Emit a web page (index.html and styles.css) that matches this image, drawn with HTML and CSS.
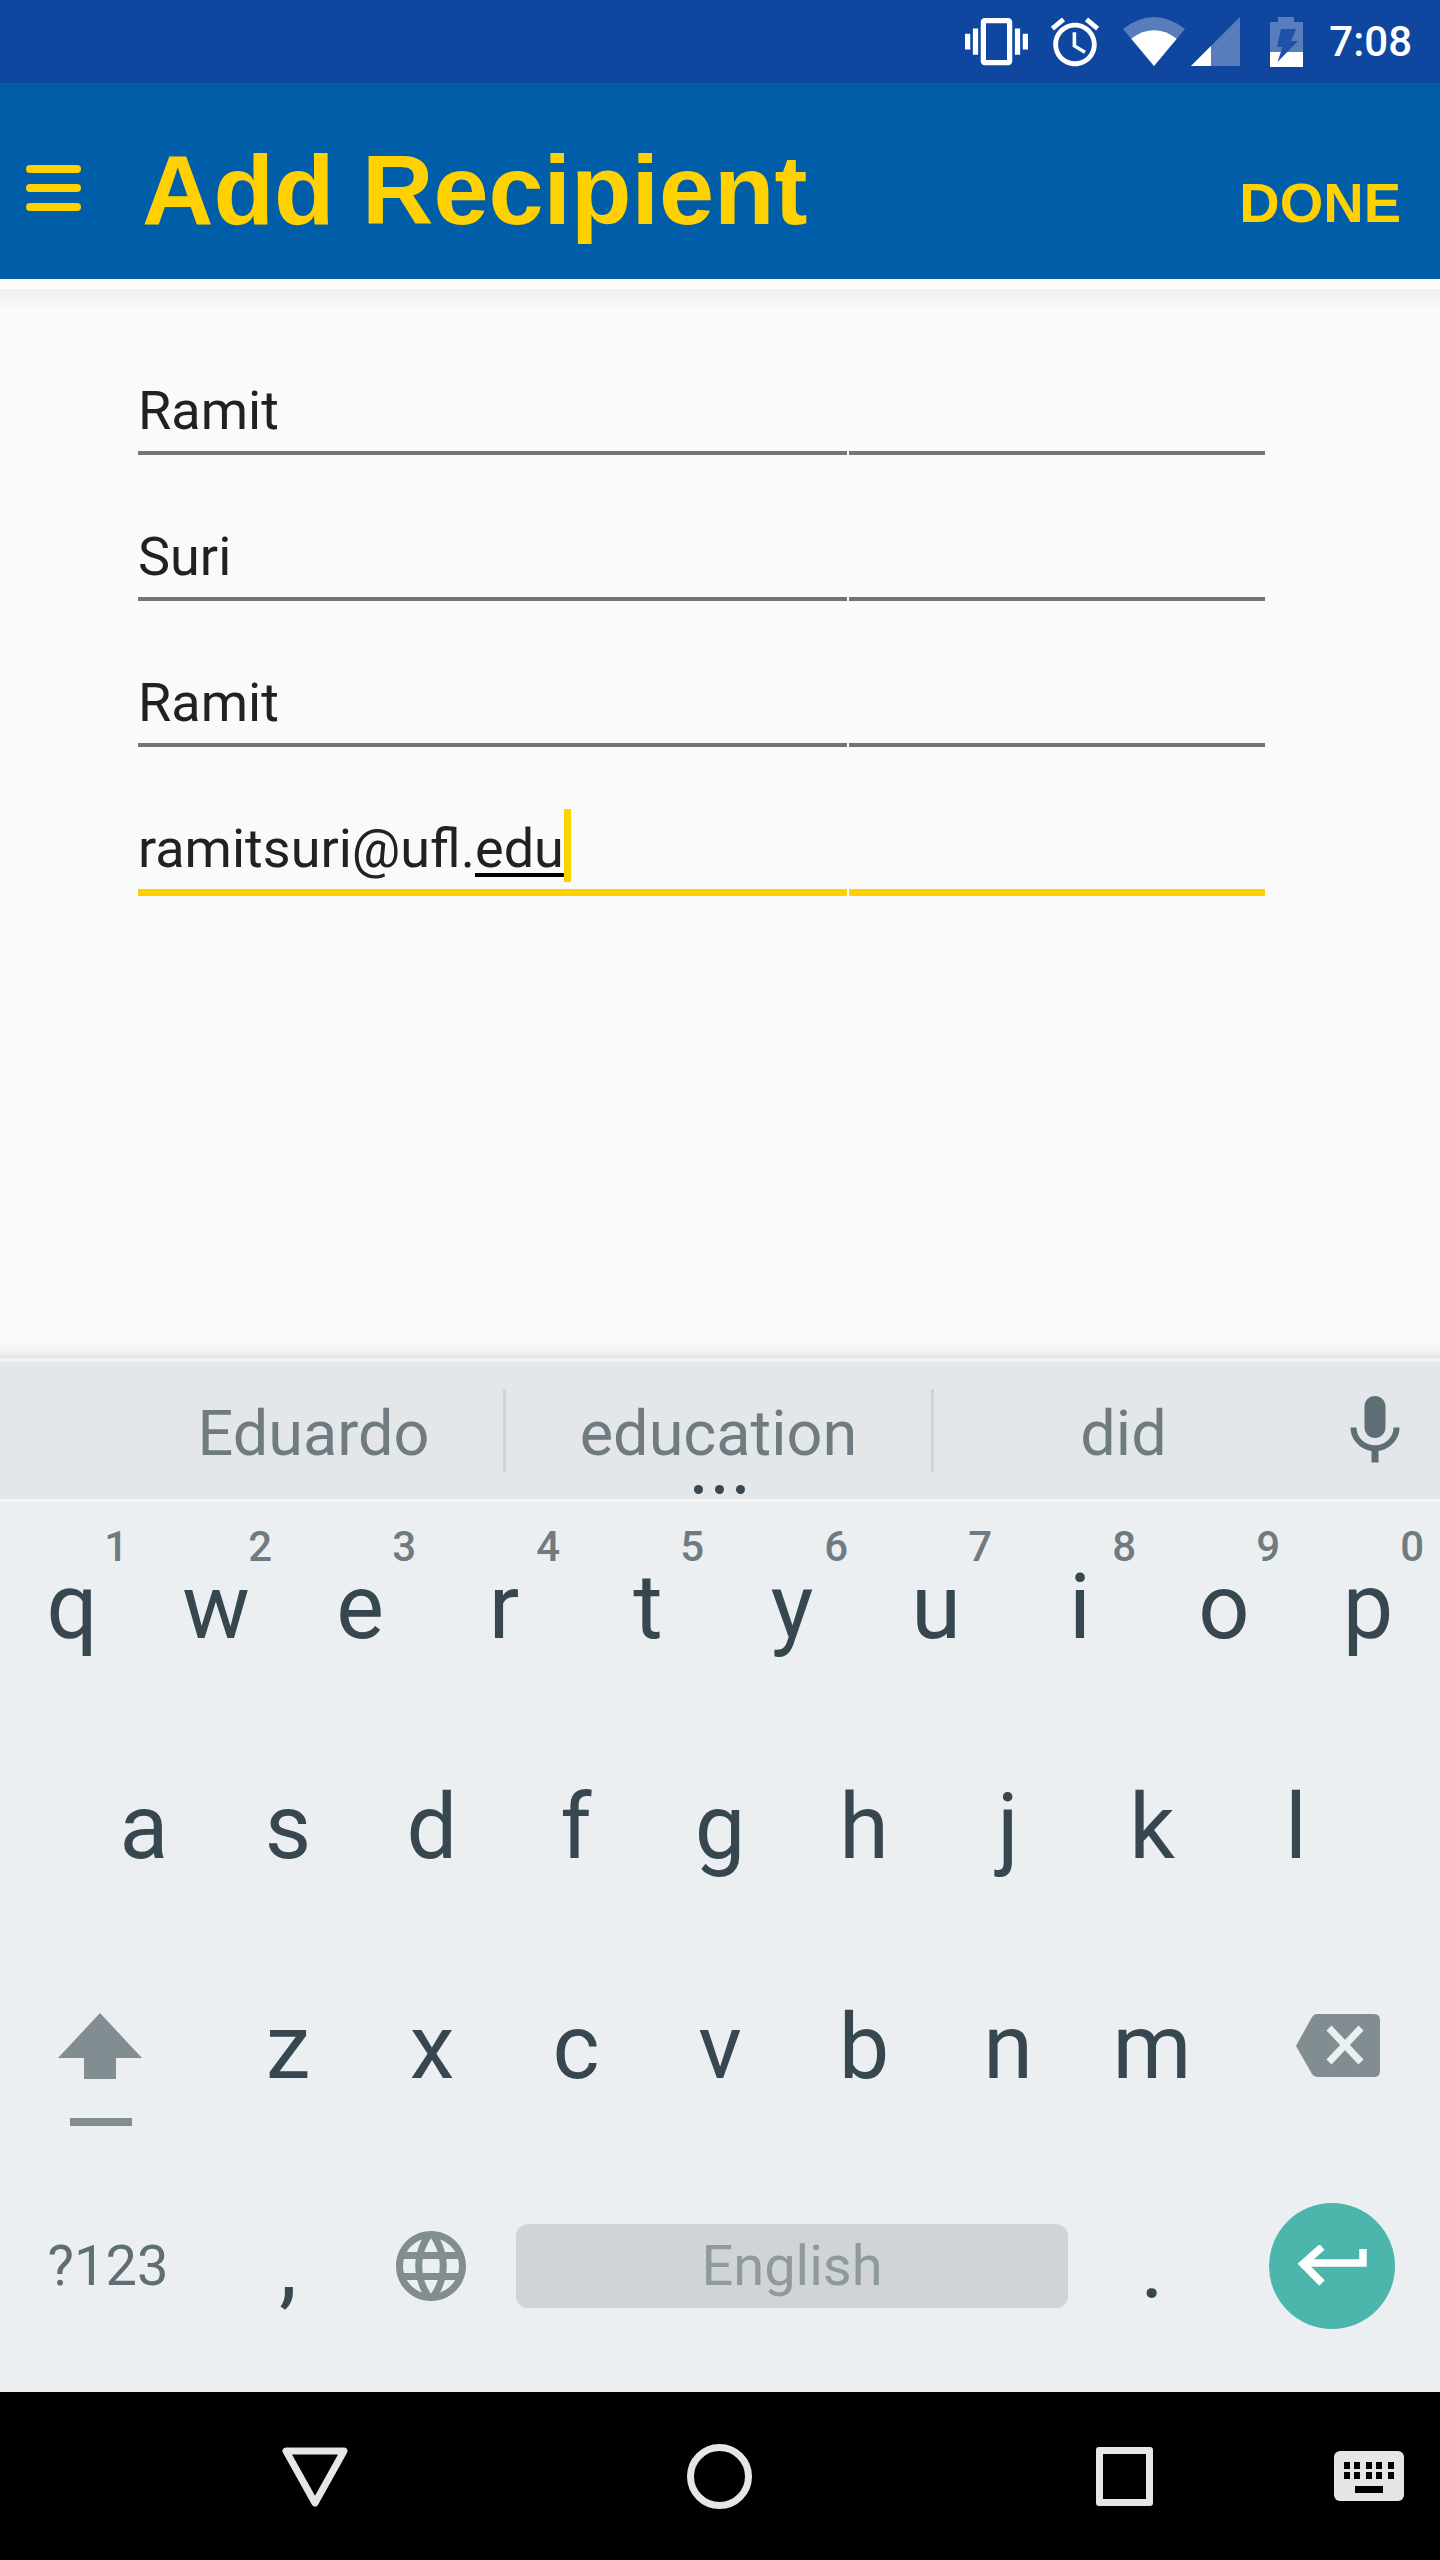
FILE: index.html
```html
<!DOCTYPE html>
<html lang="en">
<head>
    <meta charset="UTF-8">
    <meta name="viewport" content="width=device-width, initial-scale=1.0">
    <title>Add Recipient</title>
    <link rel="stylesheet" href="styles.css">
</head>
<body>
    <div class="status-bar">
        <svg class="status-vibrate" width="63" height="63" viewBox="0 0 24 24" fill="#fff"><path d="M0 15h2V9H0v6zm3 2h2V7H3v10zm19-8v6h2V9h-2zm-3 8h2V7h-2v10zM16.5 3h-9C6.67 3 6 3.67 6 4.5v15c0 .83.67 1.5 1.5 1.5h9c.83 0 1.5-.67 1.5-1.5v-15c0-.83-.67-1.5-1.5-1.5zM16 19H8V5h8v14z"/></svg>
        <svg class="status-alarm" width="58" height="58" viewBox="0 0 24 24" fill="#fff"><path d="M22 5.72l-4.6-3.86-1.29 1.53 4.6 3.86L22 5.72zM7.88 3.39L6.6 1.86 2 5.71l1.29 1.53 4.59-3.85zM12.5 8H11v6l4.75 2.85.75-1.23-4-2.37V8zM12 4c-4.97 0-9 4.03-9 9s4.03 9 9 9 9-4.03 9-9-4.03-9-9-9zm0 16c-3.87 0-7-3.13-7-7s3.13-7 7-7 7 3.13 7 7-3.13 7-7 7z"/></svg>
        <svg class="status-wifi" width="62" height="49" viewBox="0 0 62 49"><path fill="#fff" fill-opacity=".3" d="M31 49L0 12Q31-12 62 12Z"/><path fill="#fff" d="M31 49L8.3 21.7Q31 5 53.7 21.7Z"/></svg>
        <svg class="status-signal" width="49" height="49" viewBox="0 0 49 49"><path fill="#fff" fill-opacity=".3" d="M0 49L49 0V49Z"/><path fill="#fff" d="M0 49L20 29V49Z"/></svg>
        <svg class="status-battery" width="33" height="50" viewBox="0 0 33 50"><path fill="#fff" fill-opacity=".3" d="M8 0H24V5H33V35H0V5H8Z"/><path fill="#fff" d="M0 35H33V50H0Z"/><path fill="#1d52a6" d="M11 12H26L21 24H28L7.5 45L12.500 30H7Z"/></svg>
        <span class="status-time">7:08</span>
    </div>

    <div class="toolbar">
        <div class="menu-icon"><span></span><span></span><span></span></div>
        <div class="toolbar-title">Add Recipient</div>
        <div class="toolbar-action">DONE</div>
    </div>

    <div class="form">
        <div class="field"><span>Ramit</span></div>
        <div class="field"><span>Suri</span></div>
        <div class="field"><span>Ramit</span></div>
        <div class="field field-active"><span>ramitsuri@ufl.<u class="composing">edu</u></span><span class="cursor"></span></div>
        <div class="form-seam"></div>
    </div>

    <div class="keyboard">
        <div class="suggestions">
            <div class="suggestion suggestion-first">Eduardo</div>
            <div class="suggestion-sep"></div>
            <div class="suggestion suggestion-mid">education</div>
            <div class="suggestion-sep"></div>
            <div class="suggestion suggestion-last">did</div>
            <svg class="mic" width="84" height="84" viewBox="0 0 24 24" fill="#5f6d75"><path d="M12 14c1.66 0 2.99-1.34 2.99-3L15 5c0-1.66-1.34-3-3-3S9 3.34 9 5v6c0 1.66 1.34 3 3 3zm5.3-3c0 3-2.54 5.1-5.3 5.1S6.7 14 6.7 11H5c0 3.41 2.72 6.23 6 6.72V21h2v-3.28c3.28-.48 6-3.3 6-6.72h-1.7z"/></svg>
            <div class="more-dots"><span></span><span></span><span></span></div>
        </div>
        <div class="keys">
            <div class="key-row key-row-top">
                <div class="key">q<span class="hint">1</span></div>
                <div class="key">w<span class="hint">2</span></div>
                <div class="key">e<span class="hint">3</span></div>
                <div class="key">r<span class="hint">4</span></div>
                <div class="key">t<span class="hint">5</span></div>
                <div class="key">y<span class="hint">6</span></div>
                <div class="key">u<span class="hint">7</span></div>
                <div class="key">i<span class="hint">8</span></div>
                <div class="key">o<span class="hint">9</span></div>
                <div class="key">p<span class="hint">0</span></div>
            </div>
            <div class="key-row key-row-home">
                <div class="key">a</div>
                <div class="key">s</div>
                <div class="key">d</div>
                <div class="key">f</div>
                <div class="key">g</div>
                <div class="key">h</div>
                <div class="key">j</div>
                <div class="key">k</div>
                <div class="key">l</div>
            </div>
            <div class="key-row">
                <div class="key key-wide">
                    <svg class="shift-icon" width="84" height="113" viewBox="0 0 84 113" fill="#828d91"><path d="M42 0L84 45H58V66H26V45H0Z"/><path d="M12 105H74V113H12Z"/></svg>
                </div>
                <div class="key">z</div>
                <div class="key">x</div>
                <div class="key">c</div>
                <div class="key">v</div>
                <div class="key">b</div>
                <div class="key">n</div>
                <div class="key">m</div>
                <div class="key key-wide">
                    <svg class="delete-icon" width="84" height="63" viewBox="0 0 84 63"><path fill="#828d91" d="M21 0H78Q84 0 84 6V57Q84 63 78 63H21Q18 63 16 60L0 32L16 3Q18 0 21 0Z"/><path stroke="#eceff2" stroke-width="7" d="M33 14L65 48M65 14L33 48"/></svg>
                </div>
            </div>
            <div class="key-row key-row-bottom">
                <div class="key key-wide key-symbols">?123</div>
                <div class="key">,</div>
                <div class="key">
                    <svg class="globe-icon" width="84" height="84" viewBox="0 0 24 24" fill="#828d91"><path d="M11.99 2C6.47 2 2 6.48 2 12s4.47 10 9.99 10C17.52 22 22 17.52 22 12S17.52 2 11.99 2zm6.93 6h-2.95c-.32-1.25-.78-2.45-1.38-3.56 1.84.63 3.37 1.91 4.33 3.56zM12 4.040c.83 1.2 1.48 2.53 1.91 3.96h-3.82c.43-1.43 1.08-2.76 1.91-3.96zM4.260 14C4.100 13.360 4 12.690 4 12s.1-1.360.26-2h3.380c-.08.66-.14 1.320-.14 2 0 .68.06 1.340.14 2H4.260zm.82 2h2.950c.32 1.250.78 2.450 1.380 3.560-1.840-.63-3.370-1.900-4.330-3.560zm2.950-8H5.080c.96-1.660 2.490-2.930 4.330-3.560C8.810 5.550 8.350 6.750 8.030 8zM12 19.960c-.83-1.200-1.480-2.530-1.910-3.960h3.820c-.43 1.430-1.080 2.760-1.910 3.960zM14.340 14H9.660c-.09-.66-.16-1.320-.16-2 0-.68.07-1.350.16-2h4.680c.09.65.16 1.320.16 2 0 .68-.07 1.340-.16 2zm.25 5.560c.6-1.110 1.060-2.310 1.380-3.560h2.950c-.96 1.650-2.490 2.930-4.330 3.560zM16.360 14c.08-.66.14-1.320.14-2 0-.68-.06-1.340-.14-2h3.380c.16.64.26 1.310.26 2s-.1 1.360-.26 2h-3.380z"/></svg>
                </div>
                <div class="space-bar">English</div>
                <div class="key">.</div>
                <div class="key key-wide">
                    <div class="enter-button">
                        <svg width="70" height="42" viewBox="0 0 70 42" fill="none" stroke="#fff" stroke-width="7.500"><path d="M66 4V18H5"/><path d="M25 2L6 19L25 38"/></svg>
                    </div>
                </div>
            </div>
        </div>
    </div>

    <div class="nav-bar">
        <svg class="nav-back" width="66" height="60" viewBox="0 0 66 60" fill="none" stroke="#e6e6e6" stroke-width="7" stroke-linejoin="round"><path d="M4 4H62L33 56Z"/></svg>
        <div class="nav-home"></div>
        <div class="nav-recent"></div>
        <svg class="nav-keyboard" width="70" height="50" viewBox="0 0 70 50"><rect width="70" height="50" rx="6" fill="#e6e6e6"/><path fill="#000" d="M10 11h6v7h-6zM20 11h6v7h-6zM32 11h6v7h-6zM42 11h6v7h-6zM54 11h6v7h-6zM10 21h6v7h-6zM20 21h6v7h-6zM32 21h6v7h-6zM42 21h6v7h-6zM54 21h6v7h-6zM21 35h28v7H21z"/></svg>
    </div>
</body>
</html>
```
FILE: styles.css
```css
body {
    display: flex;
    flex-direction: column;
    width: 1440px;
    height: 2560px;
    margin: 0;
    overflow: hidden;
    background-color: #fafafa;
    font-family: Roboto, sans-serif;
}

/* status bar */
.status-bar {
    display: flex;
    align-items: center;
    justify-content: flex-end;
    height: 83px;
    padding-right: 28px;
    background-color: #0f46a0;
}

.status-alarm {
    margin-left: 18px;
}

.status-wifi {
    margin-left: 19px;
}

.status-signal {
    margin-left: 6px;
}

.status-battery {
    margin-left: 30px;
}

.status-time {
    margin-left: 26px;
    color: white;
    font-size: 42px;
    font-weight: 500;
}

/* toolbar */
.toolbar {
    display: flex;
    align-items: center;
    height: 196px;
    background-color: #005ea8;
    color: #ffd100;
    font-family: "Liberation Sans", sans-serif;
    font-weight: bold;
}

.menu-icon {
    display: flex;
    flex-direction: column;
    gap: 11px;
    width: 55px;
    margin-left: 26px;
    margin-top: 13px;
}

.menu-icon span {
    height: 8px;
    border-radius: 4px;
    background-color: #ffd100;
}

.toolbar-title {
    margin-left: 61px;
    margin-top: 17px;
    font-size: 99px;
}

.toolbar-action {
    margin-left: auto;
    margin-right: 39px;
    margin-top: 42px;
    font-size: 56px;
}

/* form */
.form {
    position: relative;
    flex: 1;
    padding: 30px 175px 0 138px;
    background-image:
        linear-gradient(to bottom, #fcfcfc 0, #fcfcfc 10px, #efefef 10px, #fafafa 32px, #fafafa 100%),
        linear-gradient(to bottom, #fafafa 0, #f6f6f6 60%, #e4e4e4 100%);
    background-size: 100% 60px, 100% 22px;
    background-position: top, bottom;
    background-repeat: no-repeat;
}

.field {
    display: flex;
    align-items: flex-end;
    box-sizing: border-box;
    height: 146px;
    padding-bottom: 9px;
    border-bottom: 4px solid #757575;
    color: #212121;
    font-size: 54px;
}

.field-active {
    height: 149px;
    border-bottom: 7px solid #ffd100;
}

.composing {
    text-decoration-thickness: 4px;
    text-underline-offset: 6px;
    text-decoration-color: black;
}

.cursor {
    width: 7px;
    height: 73px;
    margin-bottom: -2px;
    background-color: #ffd100;
}

/* faint seam down the form, it cuts the underlines */
.form-seam {
    position: absolute;
    left: 847px;
    top: 80px;
    width: 2px;
    height: 606px;
    background-color: #fdfdfd;
}

/* keyboard */
.keyboard {
    border-top: 4px solid #f0f1f1;
    background-color: #eceff2;
}

.suggestions {
    position: relative;
    display: flex;
    align-items: center;
    height: 137px;
    border-bottom: 3px solid #f6f7f8;
    background-color: #e3e7ea;
    color: #6f7b81;
    font-size: 63px;
}

.suggestion {
    padding-top: 5px;
    text-align: center;
}

.suggestion-first {
    box-sizing: border-box;
    width: 503px;
    padding-left: 124px;
}

.suggestion-mid {
    width: 425px;
}

.suggestion-last {
    width: 379px;
}

.suggestion-sep {
    width: 3px;
    height: 83px;
    background-color: #cfd4d7;
}

.mic {
    margin-left: 20px;
    margin-top: 1px;
}

.more-dots {
    position: absolute;
    left: 694px;
    bottom: 5px;
    display: flex;
    gap: 12px;
}

.more-dots span {
    width: 9px;
    height: 9px;
    border-radius: 50%;
    background-color: #37474f;
}

.keys {
    height: 890px;
}

.key-row {
    display: flex;
    height: 219.5px;
    color: #37474f;
    font-size: 90px;
}

.key-row-home {
    padding-left: 72px;
}

.key {
    position: relative;
    display: flex;
    align-items: center;
    justify-content: center;
    box-sizing: border-box;
    width: 144px;
    padding-bottom: 6px;
}

.key-row-top .key {
    padding-bottom: 8px;
}

.key-row-home .key {
    padding-bottom: 8px;
}

.key-row-bottom .key {
    padding-bottom: 8px;
}

.key-wide {
    width: 216px;
}

.hint {
    position: absolute;
    top: 20px;
    right: 16px;
    color: #6f7b81;
    font-size: 42px;
    font-weight: 500;
}

.shift-icon {
    align-self: flex-start;
    margin-top: 72px;
    margin-right: 16px;
}

.delete-icon {
    align-self: flex-start;
    margin-top: 73px;
    margin-left: 12px;
}

.globe-icon {
    margin-left: -2px;
}

.key-symbols {
    color: #5f6d75;
    font-size: 56px;
}

.space-bar {
    display: flex;
    align-items: center;
    justify-content: center;
    width: 552px;
    height: 84px;
    margin: 63px 12px 0;
    border-radius: 12px;
    background-color: #d0d4d7;
    color: #8f9a9f;
    font-size: 56px;
}

.enter-button {
    display: flex;
    align-items: center;
    justify-content: center;
    width: 126px;
    height: 126px;
    border-radius: 50%;
    background-color: #4db6ac;
}

/* nav bar */
.nav-bar {
    position: relative;
    height: 168px;
    background-color: black;
}

.nav-back,
.nav-home,
.nav-recent,
.nav-keyboard {
    position: absolute;
}

.nav-back {
    left: 282px;
    top: 55px;
}

.nav-home {
    left: 687px;
    top: 52px;
    width: 65px;
    height: 65px;
    box-sizing: border-box;
    border: 7px solid #e6e6e6;
    border-radius: 50%;
}

.nav-recent {
    left: 1096px;
    top: 55px;
    width: 57px;
    height: 59px;
    box-sizing: border-box;
    border: 7px solid #e6e6e6;
    border-radius: 3px;
}

.nav-keyboard {
    left: 1334px;
    top: 59px;
}
```
